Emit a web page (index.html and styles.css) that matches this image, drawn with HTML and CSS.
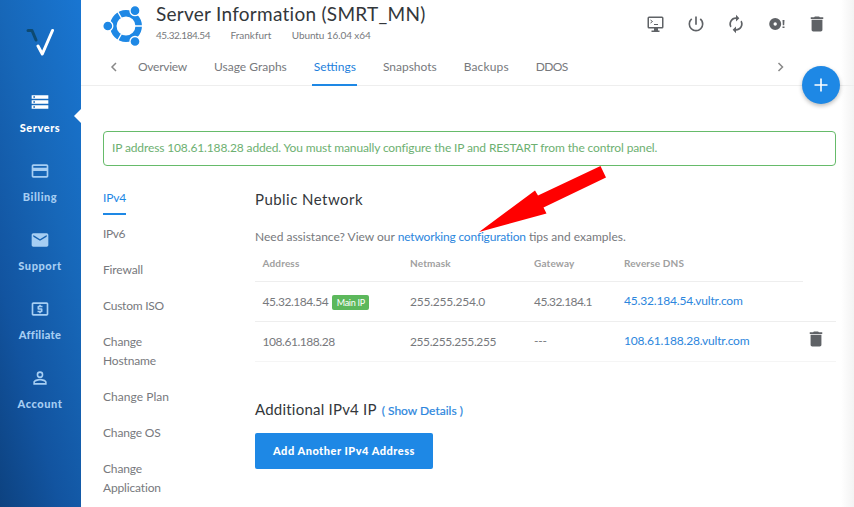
FILE: index.html
```html
<!DOCTYPE html>
<html lang="en">
<head>
<meta charset="utf-8">
<title>Server Information</title>
<link rel="stylesheet" href="styles.css">
</head>
<body>
<div class="app">
  <nav class="sidebar">
    <svg class="logo" viewBox="0 0 28 28" width="28" height="28"><path d="M2 2.500h4l4 9.500" stroke="#0d4a72"/><path d="M12 18l4.300 8L26.500 2.500" stroke="#fff"/></svg>
    <a class="nav-item active"><svg viewBox="0 0 24 24" width="20" height="20"><path d="M2 20h20v-4H2v4zm2-3h2v2H4v-2zM2 4v4h20V4H2zm4 3H4V5h2v2zm-4 7h20v-4H2v4zm2-3h2v2H4v-2z"/></svg><span>Servers</span></a>
    <a class="nav-item"><svg viewBox="0 0 24 24" width="20" height="20"><path d="M20 4H4c-1.100 0-2 .9-2 2v12c0 1.100.9 2 2 2h16c1.100 0 2-.9 2-2V6c0-1.100-.9-2-2-2zm0 14H4v-6h16v6zm0-10H4V6h16v2z"/></svg><span>Billing</span></a>
    <a class="nav-item"><svg viewBox="0 0 24 24" width="20" height="20"><path d="M20 4H4c-1.100 0-2 .9-2 2v12c0 1.100.9 2 2 2h16c1.100 0 2-.9 2-2V6c0-1.100-.9-2-2-2zm0 4l-8 5-8-5V6l8 5 8-5v2z"/></svg><span>Support</span></a>
    <a class="nav-item narrow"><svg viewBox="0 0 24 24" width="20" height="20"><path d="M11 17h2v-1h1c.55 0 1-.45 1-1v-3c0-.55-.45-1-1-1h-3v-1h4V8h-2V7h-2v1h-1c-.55 0-1 .45-1 1v3c0 .55.45 1 1 1h3v1H9v2h2v1zM20 4H4c-1.100 0-2 .9-2 2v12c0 1.100.9 2 2 2h16c1.100 0 2-.9 2-2V6c0-1.100-.9-2-2-2zm0 14H4V6h16v12z"/></svg><span>Affiliate</span></a>
    <a class="nav-item"><svg viewBox="0 0 24 24" width="20" height="20"><path d="M12 5.900a2.100 2.100 0 1 1 0 4.200 2.100 2.100 0 0 1 0-4.200m0 9c2.970 0 6.100 1.460 6.100 2.100v1.100H5.900V17c0-.64 3.130-2.100 6.100-2.100M12 4a4 4 0 1 0 0 8 4 4 0 0 0 0-8zm0 9c-2.670 0-8 1.340-8 4v3h16v-3c0-2.660-5.330-4-8-4z"/></svg><span>Account</span></a>
  </nav>
  <div class="content">
    <header class="header">
      <svg class="ubuntu" viewBox="0 0 40 40" width="40" height="40"><circle cx="23" cy="20" r="12.700" fill="none" stroke="#1e88e5" stroke-width="6.500"/><path d="M23 20h18M23 20L13 2.700M23 20L13 37.300" stroke="#fff" stroke-width="1.300"/><g fill="#1e88e5" stroke="#fff" stroke-width="1.300"><circle cx="4.800" cy="20" r="5"/><circle cx="32" cy="4.700" r="5"/><circle cx="32" cy="35.500" r="5"/></g></svg>
      <div class="heading">
        <h1>Server Information (SMRT_MN)</h1>
        <div class="meta"><span class="ip">45.32.184.54</span><span>Frankfurt</span><span class="os">Ubuntu 16.04 x64</span></div>
      </div>
      <div class="actions">
        <svg viewBox="0 0 20 20"><path fill-rule="evenodd" d="M4 2.500h13q1.500 0 1.500 1.500v9q0 1.500-1.500 1.500H13v2h1.500V18h-8v-1.500H9v-2H4q-1.500 0-1.500-1.500V4Q2.500 2.500 4 2.500zM4 4v9h13V4z"/><path d="M5.500 6l2 1.500-2 1.500M9 10.500h4" fill="none" stroke="#5f6266"/></svg>
        <svg viewBox="0 0 24 24"><path d="M13 3h-2v10h2V3zm4.830 2.170l-1.420 1.420A6.920 6.920 0 0 1 19 12a7 7 0 1 1-11.420-5.420L6.170 5.170A8.930 8.930 0 0 0 3 12a9 9 0 1 0 18 0c0-2.740-1.230-5.180-3.170-6.830z"/></svg>
        <svg viewBox="0 0 24 24"><path d="M12 6v3l4-4-4-4v3a8 8 0 0 0-6.760 12.260L6.700 14.800A5.870 5.870 0 0 1 6 12a6 6 0 0 1 6-6zm6.760 1.740L17.300 9.200c.44.840.7 1.790.7 2.800a6 6 0 0 1-6 6v-3l-4 4 4 4v-3a8 8 0 0 0 6.760-12.260z"/></svg>
        <svg viewBox="0 0 20 20"><path fill-rule="evenodd" d="M8.200 4a6 6 0 1 1 0 12 6 6 0 0 1 0-12zm0 4.300a1.700 1.700 0 1 0 0 3.400 1.700 1.700 0 0 0 0-3.400zM15.500 6h2l-.3 5.200h-1.400zM15.500 12.500h2v1.600h-2z"/></svg>
        <svg viewBox="0 0 24 24"><path d="M5.500 19c0 1.100.9 2 2 2h9c1.100 0 2-.9 2-2V7h-13v12zM19.500 4h-4l-1-1h-5l-1 1h-4v2h15V4z"/></svg>
      </div>
    </header>
    <div class="tabs">
      <svg class="chev" viewBox="0 0 8 10" width="8" height="10"><path d="M6 1L2 5l4 4"/></svg>
      <a class="t1">Overview</a><a>Usage Graphs</a><a class="on">Settings</a><a>Snapshots</a><a class="t5">Backups</a><a class="t6">DDOS</a>
      <svg class="chev next" viewBox="0 0 8 10" width="8" height="10"><path d="M1.500 1l4 4-4 4"/></svg>
      <button class="fab"><svg viewBox="0 0 14 14" width="14" height="14"><path d="M7 .5v13M.5 7h13"/></svg></button>
    </div>
    <main>
      <div class="alert">IP address 108.61.188.28 added. You must manually configure the IP and RESTART from the control panel.</div>
      <div class="columns">
        <ul class="menu">
          <li class="on">IPv4</li><li class="v6">IPv6</li><li>Firewall</li><li class="iso">Custom ISO</li><li>Change<br>Hostname</li><li class="plan">Change Plan</li><li>Change OS</li><li>Change<br>Application</li>
        </ul>
        <section class="panel">
          <h2>Public Network</h2>
          <p>Need assistance? View our <a>networking configuration</a> tips and examples.</p>
          <div class="table">
            <div class="row head"><span>Address</span><span>Netmask</span><span>Gateway</span><span>Reverse DNS</span></div>
            <div class="row"><span class="addr">45.32.184.54<i class="badge">Main IP</i></span><span class="mask">255.255.254.0</span><span class="gate">45.32.184.1</span><a>45.32.184.54.vultr.com</a></div>
            <div class="row last"><span class="addr">108.61.188.28</span><span class="mask wide">255.255.255.255</span><span>---</span><a>108.61.188.28.vultr.com</a><svg class="trash" viewBox="0 0 24 24" width="20" height="20"><path d="M5.500 19c0 1.100.9 2 2 2h9c1.100 0 2-.9 2-2V7h-13v12zM19.500 4h-4l-1-1h-5l-1 1h-4v2h15V4z"/></svg></div>
          </div>
          <h2 class="more">Additional IPv4 IP<a>( Show Details )</a></h2>
          <button class="add">Add Another IPv4 Address</button>
        </section>
      </div>
    </main>
  </div>
</div>
<svg class="pointer" viewBox="0 0 128 68" width="128" height="68"><path d="M0 66L56 24.500l3 5L121.500 0l5.500 11.500L64.500 41.500l3 6z" fill="red"/></svg>
</body>
</html>
```
FILE: styles.css
```css
* { box-sizing: border-box; }
body { margin: 0; width: 854px; height: 507px; overflow: hidden; background: #fff; color: #77797d; font: 12px/18.800px Lato, "Open Sans", sans-serif; }
h1, h2, p, ul { margin: 0; padding: 0; font-weight: 400; }
a { color: #2c86dd; text-decoration: none; }
i { font-style: normal; }
svg { display: block; flex: none; }
.app { display: flex; height: 507px; }
.sidebar { position: relative; flex: 0 0 81px; display: flex; flex-direction: column; align-items: center; padding: 28px 1px 0 0; background: linear-gradient(75deg, #0d4280 0%, #1254a0 28%, #1767b8 62%, #1976d2 100%); }
.logo { fill: none; stroke-width: 3; stroke-linecap: round; stroke-linejoin: round; margin-bottom: 36px; }
.nav-item { height: 69px; display: flex; flex-direction: column; align-items: center; color: #a6cef3; font-weight: 900; font-size: 11px; letter-spacing: .56px; }
.nav-item.narrow { letter-spacing: .33px; }
.nav-item svg { fill: currentColor; margin-bottom: 7px; }
.nav-item.active { color: #fff; }
.sidebar::after { content: ""; position: absolute; right: 0; top: 109px; border: 7px solid transparent; border-right-color: #fff; border-left: 0; }
.content { flex: 1; background: linear-gradient(90deg, #fff 0 760px, #f3f3f3 773px); }
.header { display: flex; height: 49px; padding: 6px 27px 0 22px; }
.heading { margin-left: 13px; margin-top: -4px; }
h1 { font-size: 19px; line-height: 24px; letter-spacing: .27px; color: #33373b; }
.meta { display: flex; gap: 20.500px; font-size: 10px; line-height: 19px; }
.ip { letter-spacing: -.44px; }
.os { letter-spacing: -.09px; }
.actions { display: flex; gap: 20.500px; margin: 8px 0 0 auto; }
.actions svg { width: 20px; height: 20px; fill: #5f6266; }
.tabs { display: flex; align-items: center; gap: 24px; height: 37px; border-bottom: 1px solid #eee; padding-left: 28.500px; padding-right: 14.500px; }
.tabs a { padding: 0 1.500px; height: 37px; line-height: 36px; color: #77797d; }
.tabs a.on { color: #1e7fdc; border-bottom: 2px solid #1e88e5; }
.tabs .t1 { letter-spacing: -.26px; }
.tabs .t5 { letter-spacing: .13px; }
.tabs .t6 { letter-spacing: -.6px; }
.chev { fill: none; stroke: #888; stroke-width: 1.500; margin-right: -5px; }
.next { margin-left: auto; margin-right: -7px; }
.fab { width: 38px; height: 38px; border: 0; border-radius: 50%; background: #1e88e5; box-shadow: 0 2px 4px #0004; padding: 0 12px; position: relative; top: 18px; }
.fab svg { fill: none; stroke: #fff; stroke-width: 1.600; }
main { padding: 45px 18px 0 22px; }
.alert { height: 35px; border: 1px solid #66bb6a; border-radius: 4px; color: #6db071; line-height: 32px; padding-left: 8px; white-space: nowrap; letter-spacing: -.13px; }
.columns { display: flex; }
.menu { width: 152px; list-style: none; padding-top: 22.700px; letter-spacing: -.15px; }
.menu li { margin-bottom: 17.300px; }
.menu .v6 { letter-spacing: -.43px; }
.menu .iso { letter-spacing: -.23px; }
.menu .plan { letter-spacing: .04px; }
.menu .on { color: #1e88e5; position: relative; }
.menu .on::after { content: ""; position: absolute; left: 0; top: 24px; width: 23px; height: 2px; background: #1e88e5; }
.panel { flex: 1; }
h2 { font-size: 15px; line-height: 20px; color: #33373b; margin-top: 23px; letter-spacing: .46px; }
.panel p { height: 18.600px; margin-top: 19px; white-space: pre; }
.panel p a { letter-spacing: -.19px; }
.row { display: grid; grid-template-columns: 147.500px 124px 90px 182px 20px; align-items: center; height: 40px; padding-left: 7.500px; border-bottom: 1px solid #eee; white-space: nowrap; letter-spacing: -.18px; }
.row.last { border-bottom-color: #f5f5f5; }
.head { height: 35px; width: 548px; font-size: 10px; font-weight: 700; color: #a0a0a0; letter-spacing: .15px; }
.addr { letter-spacing: -.45px; }
.addr, .mask, .gate { padding-top: 2px; }
.mask { letter-spacing: -.24px; }
.mask.wide { letter-spacing: -.4px; }
.gate { letter-spacing: -.56px; }
.badge { display: inline-block; margin-left: 4px; width: 37px; height: 15px; line-height: 15px; background: #5cb85c; color: #fff; border-radius: 2px; font-size: 9px; text-align: center; letter-spacing: -.3px; vertical-align: 0; }
.trash { fill: #5f6266; margin-top: -4px; }
.more { margin-top: 37px; letter-spacing: .22px; }
.more a { font-size: 12px; margin-left: 5px; letter-spacing: 0; -webkit-text-stroke: .2px; }
.add { display: block; margin-top: 12px; width: 178px; height: 36px; border: 0; border-radius: 2px; background: #1e88e5; color: #fff; font: 900 11px Lato, sans-serif; letter-spacing: .5px; }
.pointer { position: absolute; left: 479px; top: 166px; }
```
